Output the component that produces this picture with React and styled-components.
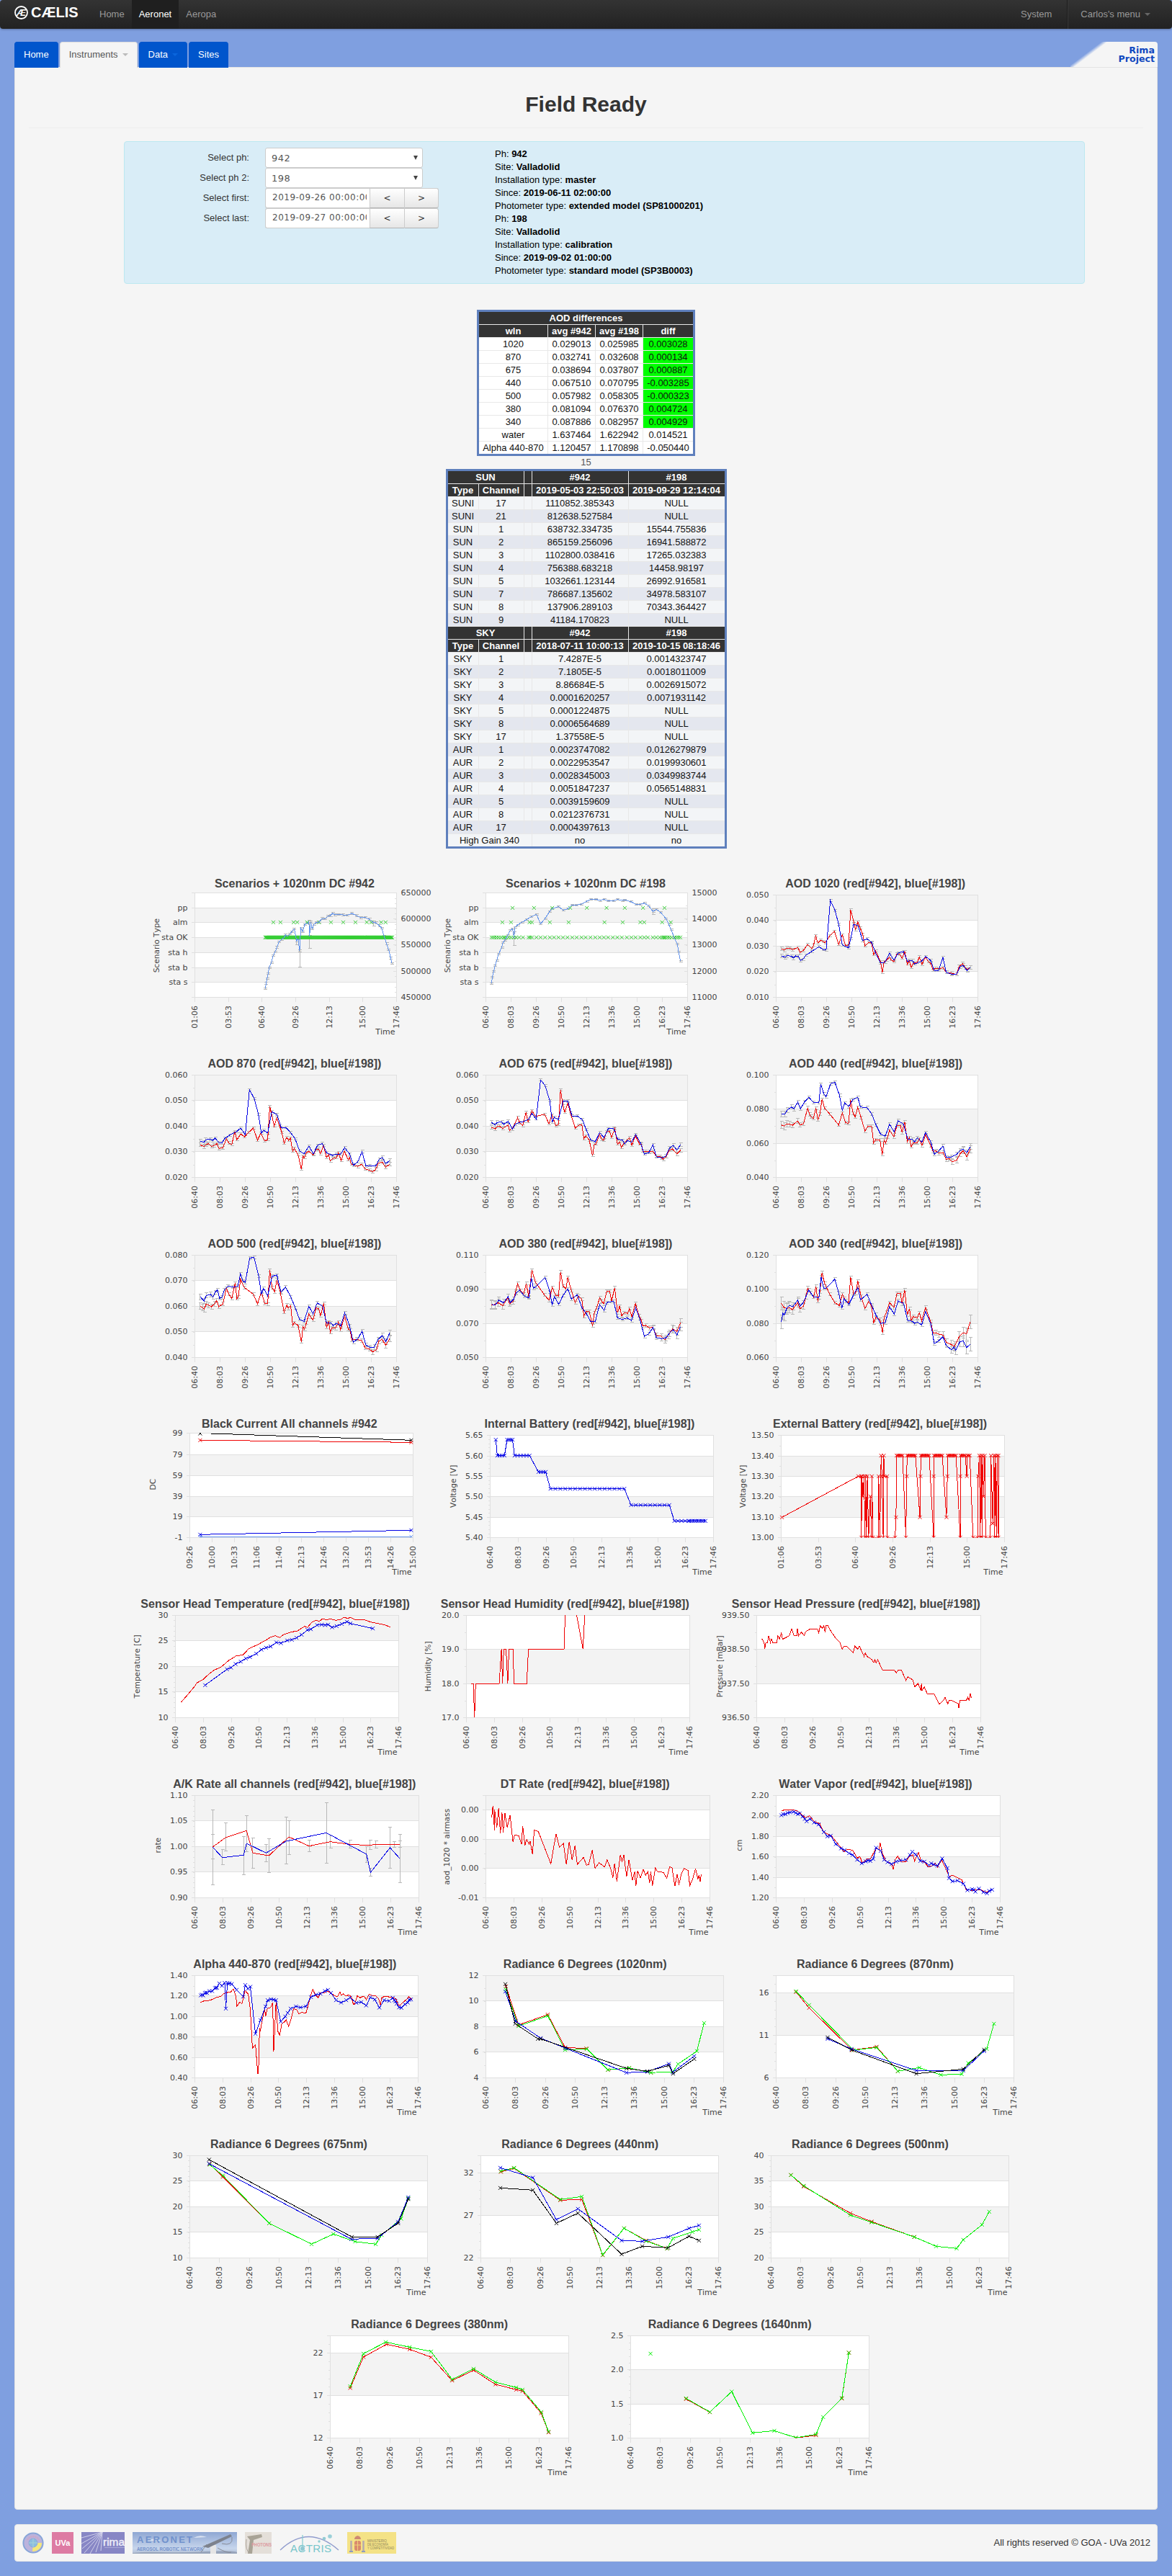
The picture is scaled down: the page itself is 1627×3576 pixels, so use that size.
import React from "react";
import styled, { createGlobalStyle, css } from "styled-components";

const Global = createGlobalStyle`
  body { margin: 0; background: #7f9fe0; }
  *, *::before, *::after { box-sizing: border-box; }
  #root { font: 13px/18px "Liberation Sans", Arial, sans-serif; color: #333; }
`;

/* ---------- top navigation ---------- */

const Navbar = styled.nav`
  display: flex;
  height: 40px;
  padding: 0 20px;
  border-radius: 4px;
  background: linear-gradient(#333, #222);
  box-shadow: 0 1px 3px rgba(0, 0, 0, 0.3);
`;
const Brand = styled.div`
  display: flex;
  align-items: flex-start;
  gap: 4px;
  width: 108px;
  padding-top: 8px;
  color: #fff;
  font-size: 20px;
  line-height: 19px;
  font-weight: bold;
`;
const NavItem = styled.a`
  padding: 11px 10px;
  color: ${(p) => (p.$active ? "#fff" : "#999")};
  background: ${(p) => (p.$active ? "#1f1f1f" : "transparent")};
`;
const NavSpacer = styled.div`
  flex: 1;
`;
const UserMenu = styled(NavItem)`
  margin-left: 11px;
  padding-left: 18px;
  border-left: 1px solid #1c1c1c;
  box-shadow: inset 1px 0 0 #3a3a3a;
`;
const Caret = styled.i`
  display: inline-block;
  margin-left: 6px;
  vertical-align: 2px;
  border: 4px solid transparent;
  border-top-color: ${(p) => p.$color};
  border-bottom: 0;
`;

/* ---------- tabs and panel ---------- */

const Shell = styled.div`
  padding: 18px 20px 20px;
`;
const TabBar = styled.div`
  display: flex;
  gap: 2px;
  height: 35px;
`;
const Tab = styled.a`
  position: relative;
  height: 36px;
  padding: 8px 12px;
  border: 1px solid #05c;
  border-bottom: 0;
  border-radius: 4px 4px 0 0;
  background: #0055cc;
  color: #fff;
  ${(p) =>
    p.$active &&
    css`
      background: #f5f5f5;
      border-color: #ddd;
      color: #555;
    `}
`;
const ProjectTab = styled.div`
  margin-left: auto;
  width: 121px;
  padding: 6px 4px 0 0;
  border-radius: 0 4px 0 0;
  background: linear-gradient(143deg, transparent 26px, #f5f5f5 31px);
  color: #1048c0;
  font: bold 12.6px/12px "DejaVu Sans", sans-serif;
  text-align: right;
`;
const Panel = styled.main`
  height: 3391px;
  padding: 33px 19px 0;
  border: 1px solid #e3e3e3;
  border-radius: 0 0 4px 4px;
  background: #f5f5f5;
`;
const Title = styled.h1`
  margin: 0;
  padding-bottom: 14px;
  border-bottom: 1px solid #eee;
  font-size: 30px;
  line-height: 36px;
  text-align: center;
`;
const InfoBox = styled.section`
  display: flex;
  width: 1334px;
  height: 198px;
  margin: 18px auto 36px 132px;
  border: 1px solid #bce8f1;
  border-radius: 4px;
  background: #d9edf7;
`;
const Form = styled.div`
  display: grid;
  grid-template-columns: 173px 1fr;
  grid-auto-rows: 28px;
  column-gap: 22px;
  width: 514px;
  padding-top: 8px;
`;
const Label = styled.label`
  padding-top: 5px;
  text-align: right;
`;
const Control = styled.div`
  display: flex;
`;
const Select = styled.div`
  display: flex;
  align-items: center;
  justify-content: space-between;
  width: 219px;
  padding: 0 6px 0 8px;
  border: 1px solid #ccc;
  border-radius: 3px;
  background: #fff;
  color: #555;
  font: 13px "DejaVu Sans", sans-serif;
  letter-spacing: 0.5px;
`;
const Arrow = styled.i`
  border: 3px solid transparent;
  border-top: 6px solid #444;
  border-bottom: 0;
`;
const DateInput = styled.input`
  width: 145px;
  height: 28px;
  padding: 0 4px 2px 9px;
  border: 1px solid #ccc;
  border-right: 0;
  border-radius: 3px 0 0 3px;
  color: #555;
  font: 12px "DejaVu Sans", sans-serif;
  letter-spacing: 0.5px;
`;
const StepButton = styled.button`
  width: 48px;
  height: 28px;
  padding: 0;
  border: 1px solid #ccc;
  border-right-width: ${(p) => (p.$last ? 1 : 0)}px;
  border-bottom-color: #b3b3b3;
  border-radius: ${(p) => (p.$last ? "0 3px 3px 0" : 0)};
  background: linear-gradient(#fff, #e6e6e6);
  color: #333;
  font: 12px "DejaVu Sans", sans-serif;
`;
const Facts = styled.div`
  padding-top: 8px;
  color: #000;
`;

/* ---------- tables ---------- */

const DataTable = styled.table`
  width: ${(p) => p.$width}px;
  margin: 0 auto;
  table-layout: fixed;
  border-collapse: collapse;
  border: 3px solid #5f80bd;
  color: #111;
  line-height: 15px;
  text-align: center;
`;
const Cell = styled.td`
  height: 18px;
  padding: 1px 0;
  border: 1px solid #e8e8e8;
  background: ${(p) => p.$bg || "#fff"};
  white-space: nowrap;
`;
const Head = styled.th`
  height: 18px;
  padding: 1px 0;
  border: 1px solid #e8e8e8;
  background: #333;
  color: #fff;
`;
const Count = styled.div`
  color: #555;
  text-align: center;
`;

const aodRows = [
  ["1020", "0.029013", "0.025985", "0.003028"],
  ["870", "0.032741", "0.032608", "0.000134"],
  ["675", "0.038694", "0.037807", "0.000887"],
  ["440", "0.067510", "0.070795", "-0.003285"],
  ["500", "0.057982", "0.058305", "-0.000323"],
  ["380", "0.081094", "0.076370", "0.004724"],
  ["340", "0.087886", "0.082957", "0.004929"],
  ["water", "1.637464", "1.622942", "0.014521"],
  ["Alpha 440-870", "1.120457", "1.170898", "-0.050440"],
];
const sunRows = [
  ["SUNI", "17", "1110852.385343", "NULL"],
  ["SUNI", "21", "812638.527584", "NULL"],
  ["SUN", "1", "638732.334735", "15544.755836"],
  ["SUN", "2", "865159.256096", "16941.588872"],
  ["SUN", "3", "1102800.038416", "17265.032383"],
  ["SUN", "4", "756388.683218", "14458.98197"],
  ["SUN", "5", "1032661.123144", "26992.916581"],
  ["SUN", "7", "786687.135602", "34978.583107"],
  ["SUN", "8", "137906.289103", "70343.364427"],
  ["SUN", "9", "41184.170823", "NULL"],
];
const skyRows = [
  ["SKY", "1", "7.4287E-5", "0.0014323747"],
  ["SKY", "2", "7.1805E-5", "0.0018011009"],
  ["SKY", "3", "8.86684E-5", "0.0026915072"],
  ["SKY", "4", "0.0001620257", "0.0071931142"],
  ["SKY", "5", "0.0001224875", "NULL"],
  ["SKY", "8", "0.0006564689", "NULL"],
  ["SKY", "17", "1.37558E-5", "NULL"],
  ["AUR", "1", "0.0023747082", "0.0126279879"],
  ["AUR", "2", "0.0022953547", "0.0199930601"],
  ["AUR", "3", "0.0028345003", "0.0349983744"],
  ["AUR", "4", "0.0051847237", "0.0565148831"],
  ["AUR", "5", "0.0039159609", "NULL"],
  ["AUR", "8", "0.0212376731", "NULL"],
  ["AUR", "17", "0.0004397613", "NULL"],
];
const stripe = (i) => (i % 2 ? "#e4e7ef" : "#f3f5f7");

function CoefficientRows({ name, dates, rows }) {
  return (
    <>
      <tr>
        <Head colSpan={2}>{name}</Head><Head /><Head>#942</Head><Head>#198</Head>
      </tr>
      <tr>
        <Head>Type</Head><Head>Channel</Head><Head /><Head>{dates[0]}</Head><Head>{dates[1]}</Head>
      </tr>
      {rows.map((r, i) => (
        <tr key={i}>
          <Cell $bg={stripe(i)}>{r[0]}</Cell>
          <Cell $bg={stripe(i)}>{r[1]}</Cell>
          <Cell $bg={stripe(i)} />
          <Cell $bg={stripe(i)}>{r[2]}</Cell>
          <Cell $bg={stripe(i)}>{r[3]}</Cell>
        </tr>
      ))}
    </>
  );
}

/* ---------- charts ---------- */

const Charts = styled.section`
  display: flex;
  flex-direction: column;
  margin: 22px 0 0;
  padding-right: 1px;
`;
const ChartRow = styled.div`
  display: flex;
  justify-content: center;
  gap: 4px;
`;
const Plot = styled.svg`
  display: block;
  flex: none;
  overflow: visible;
  font: 11px "DejaVu Sans", sans-serif;
  font-kerning: none;
  fill: #444;
`;
const ChartTitle = styled.text`
  font: bold 16px "Liberation Sans", Arial, sans-serif;
  font-kerning: none;
  text-anchor: middle;
`;

const T9 = ["06:40", "08:03", "09:26", "10:50", "12:13", "13:36", "15:00", "16:23", "17:46"];
const T7 = ["01:06", "03:53", "06:40", "09:26", "12:13", "15:00", "17:46"];
const T11 = ["09:26", "10:00", "10:33", "11:06", "11:40", "12:13", "12:46", "13:20", "13:53", "14:26", "15:00"];

const UY = 3;
const wide = { k: 2.4123 };
const fine = { k: 1.2544 };
const mid = { k: 1.8447 };
const SHIFT = 1471.5;

const parse = (s) => s.trim().split(/\s+/).map((p) => p.split(",").map(Number));
const carry = (s) => parse(s).map(([x, y]) => [x + SHIFT, y]);
const both = (a, b) => [...parse(a), ...carry(b)];
const run = (x1, x2, y, step) => {
  const out = [];
  for (let x = x1; x <= x2; x += step) out.push([x, y]);
  return out;
};
const list = (s) => s.split(" ").map(Number);
const R = "#f00000", B = "#0000e6", G = "#00f000", K = "#000", C = "#6495ed", L = "#32cd32";

function Chart({ c }) {
  const X = (x) => x / c.k + c.ox;
  const Y = (y) => (y - (c.oy || 0)) / UY;
  const px = (v) => Math.round(v) + 0.5;
  const [x1, x2, y1, y2] = c.box;
  const l = px(X(x1)), r = px(X(x2)), t = px(Y(y1)), b = px(Y(y2));
  const edges = [...new Set([y1, ...c.y.map((v) => v[0]), y2])].sort((m, n) => n - m);
  const minors = [];
  if (c.minor) for (let y = y2 - c.minor; y > y1 + 4; y -= c.minor) minors.push(y);
  const rminors = [];
  if (c.rminor) for (let y = y2 - c.rminor; y > y1 + 4; y -= c.rminor) rminors.push(y);
  const id = "clip" + c.title.replace(/\W/g, "");
  const cross = (x, y) => `M${x - 2.5} ${y - 2.5}l5 5m0 -5l-5 5`;
  return (
    <Plot width="400" height="250" viewBox="0 0 400 250">
      <clipPath id={id}><rect x={l - 3} y={t - 0.5} width={r - l + 3} height={b - t + 0.5} /></clipPath>
      <ChartTitle x={X(c.tx)} y="32">{c.title}</ChartTitle>
      <g shapeRendering="crispEdges">
        {edges.slice(0, -1).map((e, i) => (
          <rect key={e} x={l} width={r - l} y={px(Y(edges[i + 1]))} height={px(Y(e)) - px(Y(edges[i + 1]))} fill={i % 2 ? "#f3f3f3" : "#fff"} />
        ))}
        <g stroke="#e0e0e0" fill="none">
          {edges.map((e) => <path key={e} d={`M${l - 5} ${px(Y(e))}H${r}`} />)}
          {minors.map((e) => <path key={e} d={`M${l - 3} ${px(Y(e))}h3`} />)}
          {(c.right || []).map(([e]) => <path key={e} d={`M${r - 5} ${px(Y(e))}h5`} />)}
          {rminors.map((e) => <path key={e} d={`M${r - 3} ${px(Y(e))}h3`} />)}
          <path d={`M${l} ${t}V${b}M${r} ${t}V${b}`} />
          {c.times.map((_, i) => <path key={i} d={`M${px(l - 0.5 + ((r - l) * i) / (c.times.length - 1))} ${b}v6`} />)}
        </g>
      </g>
      {c.y.map(([y, s]) => s && <text key={y} x={l - 10} y={Y(y) + 4} textAnchor="end">{s}</text>)}
      {(c.right || []).map(([y, s]) => <text key={y} x={r + 6} y={Y(y) + 4}>{s}</text>)}
      {c.times.map((s, i) => (
        <text key={i} textAnchor="end" transform={`translate(${l + ((r - l) * i) / (c.times.length - 1) + 3.5} 196) rotate(-90)`}>{s}</text>
      ))}
      {c.time !== false && <text x={r - 2} y="236" textAnchor="end">Time</text>}
      {c.label && (
        <text textAnchor="middle" fontSize="10.6" transform={`translate(${X(c.label[1]) + 4} ${Y(c.label[2])}) rotate(-90)`}>{c.label[0]}</text>
      )}
      <g clipPath={`url(#${id})`} fill="none" shapeRendering="crispEdges">
        {(c.bars || []).map(([x, a, z], i) => (
          <path key={i} stroke="#b8b8b8" d={`M${X(x)} ${Y(a)}V${Y(z)}M${X(x) - 2} ${Y(a)}h5M${X(x) - 2} ${Y(z)}h5`} />
        ))}
        {c.series.map((s, i) => s.err && (
          <path key={i} stroke="#b8b8b8" d={s.p.map(([x, y], j) => {
            const n = s.p.length;
            const e = s.err + (s.edge || 0) * Math.max(0, 1 - j / (n * 0.16), 1 - (n - 1 - j) / (n * 0.16));
            return `M${X(x)} ${Y(y) - e}v${2 * e}M${X(x) - 2} ${Y(y) - e}h5M${X(x) - 2} ${Y(y) + e}h5`;
          }).join("")} />
        ))}
        {c.series.map((s, i) => (
          <g key={i} stroke={s.c}>
            {!s.dots && <path d={"M" + s.p.map(([x, y]) => `${X(x).toFixed(1)} ${Y(y).toFixed(1)}`).join("L")} />}
            {(s.mark || s.dots) && <path shapeRendering="auto" d={s.p.map(([x, y]) => cross(X(x), Y(y))).join("")} />}
          </g>
        ))}
      </g>
    </Plot>
  );
}

const line = (c, p, o = {}) => ({ c, p: typeof p === "string" ? parse(p) : p, ...o });
const aod = { err: 1.6, edge: 1 };
const g4 = (o, s) => [[127 + o, s[0]], [232 + o, s[1]], [340 + o, s[2]], [445 + o, s[3]], [553 + o, s[4]]];
const g3 = (o, s) => [[127 + o, s[0]], [268 + o, s[1]], [411 + o, s[2]], [553 + o, s[3]]];
const g5 = (o, s) => [[127 + o, s[0]], [211 + o, s[1]], [298 + o, s[2]], [382 + o, s[3]], [468 + o, s[4]], [553 + o, s[5]]];
const gp = (o, s) => [[127 + o, null], [199 + o, s[0]], [376 + o, s[1]], [553 + o, s[2]]];
const scen = [[118, null], [181, "pp"], [241, "alm"], [304, "sta OK"], [367, "sta h"], [430, "sta b"], [490, "sta s"], [553, null]];
const rightAxis = (s) => [118, 226, 334, 445, 553].map((y, i) => [y, s[i]]);
const A0 = { ...wide, ox: -19 }, A1 = { ...wide, ox: -423 }, B2 = { ...wide, ox: -217.5 };

const rows = [
  [
    { ...A0, title: "Scenarios + 1020nm DC #942", tx: 528, box: [193, 869, 118, 553], y: scen, times: T7, label: ["Scenario Type", 66, 338],
      right: rightAxis(["650000", "600000", "550000", "500000", "450000"]), rminor: 21.75,
      bars: [[546, 310, 427], [578, 240, 348], [535, 300, 333], [793, 235, 256]],
      series: [
        line(L, [457, 481, 525, 537, 570, 610, 650, 691, 732, 770, 785, 818, 833].map((x) => [x, 241]), { dots: 1 }),
        line(L, run(430, 856, 304, 2.4), { dots: 1 }),
        line(C, "430,517 433,495 436,475 440,455 443,430 450,410 456,380 463,365 469,345 476,322 485,312 493,305 498,293 505,300 512,290 519,280 527,268 535,318 540,310 545,360 549,265 555,280 562,250 570,245 576,237 578,300 582,240 587,268 593,250 600,242 610,240 620,225 630,227 640,215 648,213 656,203 663,210 675,208 690,210 705,211 720,204 735,213 750,222 765,221 778,228 790,240 800,243 812,255 820,265 828,300 836,330 843,355 850,390 854,412", { err: 1.2 }),
      ] },
    { ...A1, title: "Scenarios + 1020nm DC #198", tx: 1502.7, box: [1168, 1843.5, 118, 553], y: scen, times: T9, label: ["Scenario Type", 1040, 338],
      right: rightAxis(["15000", "14000", "13000", "12000", "11000"]), rminor: 54.4,
      bars: [[1263, 280, 337], [1728.5, 185, 208]],
      series: [
        line(L, [1258, 1330, 1391, 1451, 1507, 1573, 1634, 1695, 1767].map((x) => [x, 181]), { dots: 1 }),
        line(L, [1224, 1253, 1315, 1323, 1383, 1446, 1566, 1627, 1686, 1699, 1759, 1788].map((x) => [x, 241]), { dots: 1 }),
        line(L, list("1188 1193 1198 1205 1212 1220 1228 1232 1237 1245 1253 1262 1270 1280 1293 1312 1317 1323 1338 1352 1367 1383 1397 1412 1427 1442 1458 1473 1489 1503 1519 1535 1550 1564 1578 1594 1609 1624 1641 1656 1670 1686 1699 1711 1728 1739 1751 1759 1764 1767 1771 1777 1783 1791 1801 1808 1814 1820").map((x) => [x, 304]), { dots: 1 }),
        line(C, both("1188,495 1190,470 1195,445 1200,420 1205,400 1212,372 1222,345 1226,325 1233,315 1242,295 1250,275 1258,268 1263,305 1266,262 1275,252 1290,240 1305,230 1320,218 1338,208 1352,247 1367,225 1383,195 1390,185 1412,176 1427,190 1442,185 1457,169 1472,169", "18,165 35,153 48,146 65,145 80,150 93,145 107,152 125,151 138,146 155,150 162,148 183,155 200,166 215,166 228,161 242,172 257,196 268,187 283,200 300,225 310,250 318,272 328,305 338,330 343,365 349,402"), { err: 1 }),
      ] },
    { ...B2, title: "AOD 1020 (red[#942], blue[#198])", tx: 1002.5, box: [669, 1345, 127, 553], minor: 53.2, time: false, times: T9,
      y: g4(0, ["0.050", "0.040", "0.030", "0.020", "0.010"]),
      series: [
        line(R, "688,350 698,357 706,348 716,349 726,355 743,346 751,367 762,358 776,333 790,351 796,335 803,297 810,327 820,316 828,320 835,326 850,297 865,278 880,332 892,293 903,338 913,335 920,190 930,236 936,272 944,240 952,265 960,290 968,340 980,325 990,328 997,375 1004,360 1020,405 1026,450 1032,405 1040,400 1050,385 1055,397 1065,405 1075,372 1085,375 1092,390 1101,363 1110,415 1116,400 1123,428 1130,412 1143,408 1150,385 1159,417 1170,385 1180,405 1188,412 1196,440 1204,433 1215,435 1230,430 1240,450 1258,453 1275,458 1283,425 1295,413 1303,428 1310,438 1321,429", aod),
        line(B, "688,380 700,387 706,380 722,382 728,390 736,381 745,383 752,400 760,395 770,378 790,362 814,343 828,355 838,356 852,150 868,192 880,250 892,335 913,347 920,310 930,250 945,255 960,317 975,310 990,325 1004,370 1020,410 1035,407 1050,370 1065,398 1080,368 1097,363 1110,403 1127,400 1134,415 1158,403 1171,383 1188,400 1200,442 1214,442 1229,388 1240,449 1258,457 1275,457 1286,427 1296,420 1310,442 1321,430", aod),
      ] },
  ],
  [
    { ...A0, oy: 750, title: "AOD 870 (red[#942], blue[#198])", tx: 528, box: [193, 869, 877, 1303], minor: 53.2, time: false, times: T9,
      y: g4(750, ["0.060", "0.050", "0.040", "0.030", "0.020"]),
      series: [
        line(R, "212,1168 225,1175 232,1166 240,1163 250,1175 258,1170 268,1163 275,1183 288,1180 300,1143 308,1160 318,1166 328,1112 335,1147 348,1122 360,1135 375,1115 390,1098 404,1148 415,1120 428,1152 438,1146 445,1008 452,1045 460,1090 469,1056 477,1085 485,1115 493,1160 502,1137 508,1150 514,1140 522,1195 527,1183 540,1210 551,1270 556,1215 561,1222 568,1200 576,1195 590,1210 600,1187 608,1185 615,1205 625,1170 635,1220 642,1208 648,1235 656,1225 668,1222 675,1200 684,1233 695,1195 708,1230 712,1220 718,1248 727,1252 740,1258 753,1248 764,1268 778,1273 790,1280 800,1270 808,1245 822,1240 833,1261 847,1248", aod),
        line(B, "212,1153 225,1157 230,1147 245,1144 254,1150 262,1140 275,1159 285,1160 295,1140 310,1128 325,1118 335,1112 347,1098 363,1125 377,938 393,975 407,1040 417,1120 424,1107 438,1118 452,1030 469,1042 483,1095 499,1096 515,1117 530,1143 545,1193 560,1206 576,1173 591,1205 605,1170 621,1162 635,1200 655,1212 668,1206 682,1207 696,1180 712,1205 725,1253 740,1238 754,1196 767,1257 780,1254 800,1255 812,1228 822,1220 833,1247 847,1233", aod),
      ] },
    { ...A1, oy: 750, title: "AOD 675 (red[#942], blue[#198])", tx: 1502.8, box: [1168, 1843.5, 877, 1303], minor: 53.2, time: false, times: T9,
      y: g4(750, ["0.060", "0.050", "0.040", "0.030", "0.020"]),
      series: [
        line(R, both("1188,1095 1200,1102 1207,1090 1215,1090 1225,1100 1243,1085 1248,1108 1260,1095 1275,1055 1282,1075 1292,1088 1303,1033 1310,1072 1323,1025 1335,1050 1365,1040 1380,1080 1390,1043 1403,1088 1412,1083 1419,938 1427,1005 1433,1033 1443,995 1452,1035 1468,1098 1478,1087 1490,1083 1497,1143 1503,1130 1515,1148 1526,1213 1532,1165 1537,1165 1550,1125 1557,1145", "92,1148 102,1112 112,1113 118,1137 129,1100 138,1165 145,1155 151,1178 160,1160 178,1137 186,1170 198,1130 212,1165 218,1165 223,1195 232,1195 245,1195 257,1195 268,1215 280,1215 292,1228 302,1215 312,1190 322,1185 337,1205 349,1190"), aod),
        line(B, both("1188,1075 1200,1085 1206,1075 1222,1072 1228,1083 1243,1070 1258,1102 1266,1083 1280,1075 1297,1070 1313,1060 1323,1037 1337,1060 1352,898 1367,920 1383,985 1391,1075 1398,1053 1412,1063 1427,985 1443,985 1457,1047 1475,1048 1492,1063 1505,1105 1520,1148 1535,1155 1550,1117", "93,1138 107,1100 125,1099 138,1143 155,1148 162,1163 172,1150 185,1157 199,1125 215,1160 228,1207 243,1200 257,1168 268,1217 285,1222 300,1215 312,1182 325,1170 337,1190 349,1167"), aod),
      ] },
    { ...B2, oy: 750, title: "AOD 440 (red[#942], blue[#198])", tx: 1003.5, box: [669, 1345, 877, 1303], minor: 71, time: false, times: T9,
      y: g3(750, ["0.100", "0.080", "0.060", "0.040"]),
      series: [
        line(R, "688,1085 698,1090 706,1080 716,1082 726,1086 742,1068 750,1085 762,1080 776,1015 782,1040 787,1050 795,1058 804,1015 810,1063 817,1040 824,978 833,1015 850,1040 880,1085 892,1035 903,1076 913,1078 920,982 928,1035 935,1052 944,1012 955,1055 968,1110 978,1090 990,1090 997,1160 1004,1146 1018,1147 1026,1208 1032,1147 1037,1160 1044,1135 1050,1107 1065,1135 1075,1087 1087,1087 1092,1117 1101,1073 1110,1155 1117,1137 1123,1175 1130,1158 1143,1160 1150,1143 1159,1170 1171,1125 1188,1170 1196,1195 1205,1193 1215,1203 1230,1200 1240,1228 1250,1225 1260,1238 1275,1232 1286,1205 1297,1192 1309,1218 1321,1185", { err: 2, edge: 3 }),
        line(B, "688,1040 700,1040 708,1022 722,1010 730,1018 743,990 752,1018 765,990 780,970 795,990 814,992 820,915 830,955 838,968 853,913 867,907 883,962 892,1025 900,993 913,1008 927,980 944,970 953,1010 975,1013 990,1038 1005,1085 1020,1122 1036,1132 1050,1082 1066,1113 1079,1067 1097,1082 1111,1143 1127,1145 1134,1155 1143,1138 1158,1157 1171,1117 1188,1155 1200,1207 1214,1195 1229,1172 1240,1220 1258,1218 1275,1208 1286,1192 1297,1185 1309,1200 1321,1175", { err: 2, edge: 2 }),
      ] },
  ],
  [
    { ...A0, title: "AOD 500 (red[#942], blue[#198])", tx: 528, box: [193, 869, 127, 553], minor: 53.2, time: false, times: T9,
      y: g4(0, ["0.080", "0.070", "0.060", "0.050", "0.040"]),
      series: [
        line(R, "212,340 220,345 226,352 232,330 240,335 250,342 260,330 267,316 274,342 288,330 300,265 308,290 318,308 329,243 335,308 340,300 347,228 360,262 390,290 404,330 417,280 428,327 438,330 445,190 453,262 461,280 469,230 480,280 493,365 502,335 507,348 515,338 522,420 527,408 540,420 551,488 556,425 561,435 568,408 576,372 582,385 590,398 600,347 609,350 615,380 626,328 635,428 642,405 648,448 653,430 665,432 675,405 682,438 696,382 708,435 714,440 720,480 735,478 753,483 764,513 778,518 790,530 803,520 810,485 822,478 833,503 847,475", { err: 2, edge: 2.5 }),
        line(B, "212,300 225,318 232,295 247,291 255,302 262,282 270,272 277,307 285,303 293,272 305,256 320,260 338,257 347,205 355,235 363,240 378,140 392,136 408,215 417,290 424,265 438,296 453,215 469,210 483,282 498,260 515,300 530,345 545,395 560,403 576,340 590,372 604,326 622,340 635,408 650,408 657,420 668,411 683,421 696,367 712,420 725,490 740,475 754,444 767,502 780,510 795,510 808,478 822,462 834,488 847,450", { err: 2, edge: 2 }),
      ] },
    { ...A1, title: "AOD 380 (red[#942], blue[#198])", tx: 1502.8, box: [1168, 1843.5, 127, 553], minor: 71, time: false, times: T9,
      y: g3(0, ["0.110", "0.090", "0.070", "0.050"]),
      series: [
        line(R, both("1188,335 1200,332 1210,325 1225,338 1243,303 1248,330 1260,320 1268,280 1275,247 1285,275 1295,290 1304,245 1312,300 1323,190 1335,240 1365,293 1380,315 1391,262 1403,295 1412,297 1419,197 1427,255 1437,268 1443,220 1455,275 1468,325 1478,298 1490,310 1497,382 1505,360 1515,362 1526,422 1532,367 1540,345 1550,305 1557,320", "92,330 102,278 112,277 118,318 129,263 138,367 145,340 152,380 160,367 172,370 178,350 186,383 198,328 210,380 218,400 223,423 233,420 245,430 257,427 268,462 285,465 297,480 308,460 322,435 337,445 349,408"), { err: 2, edge: 4 }),
        line(B, both("1188,332 1200,335 1212,315 1228,325 1243,300 1250,325 1262,310 1270,285 1282,273 1297,297 1313,305 1321,222 1328,265 1337,258 1367,220 1383,280 1391,335 1398,300 1413,332 1427,295 1443,268 1455,310 1475,292 1490,345 1505,370 1520,405 1535,403 1550,333", "93,357 102,325 125,318 138,388 155,395 170,388 185,400 199,347 212,390 228,465 243,455 257,428 268,470 285,475 300,472 312,452 325,437 337,460 349,425"), { err: 2, edge: 4 }),
      ] },
    { ...B2, title: "AOD 340 (red[#942], blue[#198])", tx: 1003.5, box: [669, 1345, 127, 553], minor: 71, time: false, times: T9,
      y: g3(0, ["0.120", "0.100", "0.080", "0.060"]),
      series: [
        line(R, "688,328 697,345 706,350 715,345 725,355 743,325 750,350 762,340 770,300 776,265 786,285 796,302 804,257 810,320 817,280 824,200 833,245 850,290 867,325 882,337 892,290 903,318 913,325 920,220 930,290 937,285 944,235 955,300 968,350 980,320 990,340 997,410 1004,387 1018,395 1027,450 1032,388 1040,365 1050,325 1065,345 1075,288 1087,287 1092,330 1101,272 1110,375 1117,350 1123,400 1130,383 1143,388 1150,368 1158,400 1171,345 1188,405 1196,450 1205,450 1215,457 1230,460 1240,490 1258,500 1268,507 1283,467 1297,450 1308,455 1321,405", { err: 2.3, edge: 7 }),
        line(B, "688,405 693,370 698,377 706,348 714,338 728,340 743,315 751,340 762,323 780,272 795,300 814,305 821,218 830,265 838,265 867,227 880,285 891,347 898,308 914,332 927,300 944,262 953,313 975,290 990,335 1004,375 1020,412 1036,408 1050,343 1066,372 1079,318 1097,328 1111,400 1127,403 1134,412 1143,405 1158,418 1171,362 1188,412 1200,495 1214,485 1229,467 1240,503 1258,522 1266,510 1272,523 1286,487 1297,485 1308,512 1321,498", { err: 2.3, edge: 7 }),
      ] },
  ],
  [
    { ...A0, oy: 750, title: "Black Current All channels #942", tx: 511, box: [177, 925, 868, 1303], times: T11, label: ["DC", 53, 1082],
      y: [[868, "99"], [958, "79"], [1045, "59"], [1132, "39"], [1216, "19"], [1303, "-1"]],
      series: [line(C, "212,1300 919,1300", { mark: 1 }), line(K, "248,870 919,898"), line(K, "212,870", { dots: 1 }), line(K, "919,898", { dots: 1 }), line(R, "212,898 919,907", { mark: 1 }), line(B, "212,1291 919,1273", { mark: 1 })] },
    { ...A1, oy: 750, title: "Internal Battery (red[#942], blue[#198])", tx: 1516, box: [1183, 1930.5, 877, 1303], minor: 17.04, times: T9, label: ["Voltage [V]", 1058, 1090],
      y: [[877, "5.65"], [962, "5.60"], [1048, "5.55"], [1132, "5.50"], [1218, "5.45"], [1303, "5.40"]],
      series: [line(B, [[1202, 896], ...run(1207, 1232, 962, 8), ...run(1240, 1258, 896, 6), ...run(1265, 1324, 962, 10), ...run(1345, 1369, 1030, 8), ...run(1385, 1639, 1100, 16.5), ...run(1655, 1788, 1168, 16), ...run(1800, 1850, 1234, 12), ...run(1850, 1907, 1234, 6)], { mark: 1 })] },
    { ...B2, oy: 750, title: "External Battery (red[#942], blue[#198])", tx: 1018, box: [686, 1434, 877, 1303], minor: 42.6, times: T7, label: ["Voltage [V]", 558, 1090],
      y: [[877, "13.50"], [962, "13.40"], [1048, "13.30"], [1132, "13.20"], [1218, "13.10"], [1303, "13.00"]],
      series: [line(R, [...parse("690,1219 946,1048 955,1048 956,1303 958,1048 961,1132 965,1048 968,1303 970,1048 973,1303 976,1048 980,1303 986,1132 990,1303 991,1048 995,1303 1013,1303 1014,1048 1018,1303 1022,962 1025,1048 1029,1303 1031,962 1033,1048 1042,1048 1043,1303 1069,1303 1072,1219"),
        ...run(1074, 1095, 962, 4), [1105, 1303], [1108, 1048], ...run(1109, 1138, 962, 4), [1152, 1219], [1154, 1048], ...run(1155, 1185, 962, 4), [1198, 1303], [1198, 1048], ...run(1199, 1228, 962, 4), [1241, 1219], [1244, 1048], ...run(1245, 1275, 962, 4), [1287, 1303], [1287, 1048], ...run(1288, 1305, 962, 4), [1309, 1048], ...run(1311, 1320, 962, 4),
        ...parse("1330,1303 1345,1303 1347,1048 1351,962 1354,1303 1357,962 1360,1303 1362,962 1365,1132 1369,962 1372,1303 1388,1303 1390,962 1396,1245 1400,962 1402,1303 1405,962 1408,1303 1411,962 1415,1303 1415,962")], { mark: 1 })] },
  ],
  [
    { ...fine, ox: -39, title: "Sensor Head Temperature (red[#942], blue[#198])", tx: 266, box: [92, 481, 127, 553], minor: 21.3, times: T9, label: ["Temperature [C]", 25, 340],
      y: g4(0, ["30", "25", "20", "15", "10"]),
      series: [
        line(R, "102,490 112,462 125,425 130,408 140,395 150,373 160,355 172,342 185,315 198,296 210,292 220,266 235,250 250,230 258,218 266,212 274,220 280,208 293,197 305,192 317,173 322,178 330,155 337,148 343,152 348,142 356,146 362,142 372,148 380,145 386,135 392,140 397,136 405,145 420,145 432,155 447,162 458,168 467,177"),
        line(B, "144,418 182,352 189,345 197,330 206,320 215,307 222,301 233,287 242,270 250,262 258,257 268,240 276,243 287,232 295,229 303,221 312,208 322,188 328,185 339,168 347,166 353,168 358,166 365,177 373,172 382,163 391,154 397,161 436,182", { mark: 1 }),
      ] },
    { ...fine, ox: -443, title: "Sensor Head Humidity (red[#942], blue[#198])", tx: 770.5, box: [598, 987, 127, 553], minor: 71, times: T9, label: ["Humidity [%]", 532, 340],
      y: g3(0, ["20.0", "19.0", "18.0", "17.0"]),
      series: [
        line(R, "607,411 611,411 613,553 615,411 656,411 660,268 662,411 664,268 668,268 671,411 673,268 680,268 682,411 704,411 707,268 769,268 771,127"),
        line(R, "791,127 802,268 805,127"),
      ] },
    { ...fine, ox: -847.5, title: "Sensor Head Pressure (red[#942], blue[#198])", tx: 1278, box: [1105, 1494, 127, 553], minor: 71, times: T9, label: ["Pressure [mBar]", 1040, 340],
      y: g3(0, ["939.50", "938.50", "937.50", "936.50"]),
      series: [line(R, "1114,225 1118,240 1119,268 1121,240 1124,240 1126,212 1129,240 1131,225 1133,240 1140,240 1142,212 1145,225 1148,198 1150,227 1162,212 1166,184 1170,212 1175,212 1176,184 1178,212 1183,198 1188,212 1190,196 1198,184 1211,184 1213,200 1216,170 1219,182 1222,170 1224,198 1226,170 1229,170 1235,196 1242,220 1250,240 1254,268 1257,256 1262,256 1273,283 1276,256 1281,268 1284,256 1292,298 1294,284 1297,298 1305,310 1309,325 1311,312 1313,325 1316,313 1324,355 1345,355 1348,367 1352,355 1357,355 1365,398 1368,383 1377,396 1380,425 1386,411 1391,440 1392,412 1393,440 1397,425 1402,454 1414,454 1423,497 1430,482 1433,468 1438,497 1440,482 1445,482 1456,495 1457,512 1459,482 1470,482 1473,468 1475,482 1477,454 1479,470")] },
  ],
  [
    { ...fine, ox: -39, oy: 750, title: "A/K Rate all channels (red[#942], blue[#198])", tx: 299.5, box: [125, 515, 877, 1303], minor: 21.3, times: T9, label: ["rate", 62, 1085],
      y: g4(750, ["1.10", "1.05", "1.00", "0.95", "0.90"]),
      bars: parse("157,937,1249 157,1040,1141 174,1102,1165 180,991,1107 211,1048,1207 216,961,1112 227,1054,1180 250,1081,1153 255,1057,1198 285,967,1162 290,982,1123 325,1063,1111 355,907,1159 362,1045,1096 396,1063,1096 425,1090,1156 431,1063,1102 432,1180,1213 441,1066,1095 466,1009,1180 473,1070,1092 483,1040,1092 483,1066,1240"),
      series: [
        line(R, "157,1092 180,1052 216,1024 227,1117 255,1128 290,1050 325,1088 362,1070 396,1081 430,1085 441,1081 483,1081"),
        line(B, "157,1092 174,1136 211,1126 216,1077 250,1117 285,1068 355,1033 396,1085 425,1122 432,1198 466,1095 483,1140"),
      ] },
    { ...fine, ox: -443, oy: 750, title: "DT Rate (red[#942], blue[#198])", tx: 805.5, box: [632, 1022, 877, 1303], minor: 61, times: T9, label: ["aod_1020 * airmass", 565, 1091],
      y: [[877, null], [937, "0.00"], [1060, "0.00"], [1180, "0.00"], [1303, "-0.01"]],
      series: [line(R, "643,968 645,922 648,1022 648,935 652,1010 655,930 658,1035 661,948 663,1033 666,950 670,1010 675,960 680,1070 683,1042 690,1045 695,1080 697,1005 701,1085 704,1060 708,1080 710,1068 714,1123 717,1022 724,1027 746,1162 755,1037 761,1093 768,1078 773,1165 778,1070 783,1145 788,1085 792,1165 803,1135 808,1168 812,1165 818,1105 823,1180 830,1158 840,1175 844,1145 850,1180 854,1220 857,1160 861,1235 867,1125 870,1155 873,1125 878,1215 882,1145 888,1230 892,1195 894,1255 897,1192 902,1220 907,1185 911,1210 915,1195 918,1243 920,1195 923,1253 928,1180 932,1195 942,1198 948,1222 953,1175 957,1178 962,1255 966,1205 969,1250 973,1205 978,1182 985,1190 988,1253 993,1225 998,1182 1002,1225 1004,1210 1006,1235 1008,1205")] },
    { ...fine, ox: -847.5, oy: 750, title: "Water Vapor (red[#942], blue[#198])", tx: 1312, box: [1138, 1528, 877, 1303], minor: 42.6, times: T9, label: ["cm", 1075, 1085],
      y: g5(750, ["2.20", "2.00", "1.80", "1.60", "1.40", "1.20"]),
      series: [
        line(R, "1148,940 1160,937 1175,940 1190,970 1197,962 1205,985 1215,995 1222,1030 1235,1045 1250,1090 1257,1112 1262,1102 1272,1105 1280,1138 1285,1132 1289,1160 1297,1142 1303,1142 1309,1115 1314,1095 1318,1105 1320,1075 1324,1120 1330,1150 1340,1163 1343,1185 1346,1145 1351,1130 1356,1152 1364,1155 1372,1128 1377,1125 1380,1150 1387,1115 1391,1150 1397,1155 1404,1175 1411,1170 1416,1160 1420,1175 1427,1145 1435,1185 1440,1215 1446,1210 1455,1220 1462,1228 1470,1270 1480,1273 1495,1270 1505,1280 1515,1270"),
        line(B, "1148,960 1151,955 1155,955 1159,950 1163,948 1170,945 1173,950 1177,955 1180,952 1185,965 1189,975 1192,985 1198,975 1205,990 1213,998 1222,1030 1228,1048 1234,1045 1243,1080 1252,1098 1258,1105 1266,1118 1272,1125 1280,1145 1288,1160 1295,1152 1299,1148 1303,1150 1308,1142 1313,1095 1321,1108 1327,1145 1333,1155 1340,1163 1348,1153 1355,1148 1365,1145 1372,1125 1376,1112 1382,1123 1390,1150 1397,1153 1405,1168 1409,1160 1413,1165 1420,1170 1428,1140 1437,1180 1440,1222 1446,1235 1455,1232 1465,1245 1472,1272 1480,1268 1483,1270 1486,1278 1492,1265 1500,1280 1506,1285 1510,1275 1515,1270", { mark: 1 }),
      ] },
  ],
  [
    { ...A0, title: "Alpha 440-870 (red[#942], blue[#198])", tx: 529, box: [193, 942, 127, 553], minor: 42.6, times: T9,
      y: g5(0, ["1.40", "1.20", "1.00", "0.80", "0.60", "0.40"]),
      series: [
        line(R, "212,239 225,233 240,232 255,226 268,217 280,215 290,203 305,197 315,195 323,183 332,215 335,255 345,237 352,245 362,190 373,205 380,270 387,430 397,415 405,535 407,535 411,345 414,355 418,325 428,265 431,297 437,265 448,260 455,240 458,445 466,237 472,360 478,375 485,330 500,313 508,338 515,315 525,265 535,270 543,287 552,280 566,285 575,245 582,210 589,185 598,208 607,220 615,200 630,198 640,192 652,203 665,213 673,213 680,195 685,210 692,203 700,213 710,208 718,215 725,247 730,245 738,212 748,220 755,215 762,215 768,228 778,205 790,212 800,212 810,225 815,250 820,220 830,214 840,215 850,218 860,220 868,225 875,250 883,250 895,235 905,225 911,215 920,228"),
        line(B, "214,210 218,207 222,210 228,200 232,198 235,200 243,192 252,192 262,180 265,178 268,178 276,160 285,170 294,158 298,265 303,158 307,162 310,160 318,163 334,187 356,215 363,167 372,182 380,174 397,370 414,313 431,256 438,230 449,226 458,228 466,230 482,319 497,298 505,283 515,265 533,256 548,260 566,256 583,217 600,207 615,203 630,192 640,187 650,200 667,230 684,240 701,230 714,220 735,241 751,238 768,252 782,218 797,227 812,261 828,230 845,233 857,220 862,230 866,235 870,245 878,260 886,262 898,247 907,240 912,228 918,227", { mark: 1 }),
      ] },
    { ...A1, title: "Radiance 6 Degrees (1020nm)", tx: 1501, box: [1168, 1964.5, 127, 553], minor: 53.2, times: T9,
      y: g4(0, ["12", "10", "8", "6", "4"]),
      series: [
        line(R, both("1236,172 1278,333 1376,290 1434,427 1505,431", "106,520 177,513 250,532"), { mark: 1 }),
        line(G, both("1235,185 1278,338 1376,295 1434,437 1507,433", "106,520 177,512 250,532 323,528 341,496 404,442 428,325"), { mark: 1 }),
        line(B, both("1234,194 1269,318 1352,388 1435,430", "168,532 238,528 310,495 323,530 395,463"), { mark: 1 }),
        line(K, both("1234,163 1267,328 1343,391 1352,391", "168,514 238,526 310,502 324,536 395,475"), { mark: 1 }),
      ] },
    { ...B2, title: "Radiance 6 Degrees (870nm)", tx: 1002, box: [669, 1466, 127, 553], minor: 35.5, times: T9, y: gp(0, ["16", "11", "6"]),
      series: [
        line(R, "737,196 781,262 925,438 1007,424 1078,526", { mark: 1 }),
        line(G, "737,193 781,250 930,438 1007,427 1078,526 1150,511 1222,541 1292,538 1314,492 1376,433 1400,328", { mark: 1 }),
        line(B, "843,391 923,433 1140,523 1297,523 1367,442", { mark: 1 }),
        line(K, "843,385 923,437 1140,536 1297,517 1367,436", { mark: 1 }),
      ] },
  ],
  [
    { ...A0, oy: 750, title: "Radiance 6 Degrees (675nm)", tx: 509, box: [177, 973, 877, 1303], minor: 21.3, times: T9, y: g4(750, ["30", "25", "20", "15", "10"]),
      series: [
        line(R, "244,912 288,966 443,1159", { mark: 1 }),
        line(G, "244,915 288,960 443,1159 585,1246 658,1204 731,1235 800,1246 820,1208 885,1140 909,1055", { mark: 1 }),
        line(B, "242,911 718,1225 806,1222 875,1153 909,1051", { mark: 1 }),
        line(K, "242,894 720,1216 806,1216 875,1159 909,1058", { mark: 1 }),
      ] },
    { ...A1, oy: 750, title: "Radiance 6 Degrees (440nm)", tx: 1484, box: [1151, 1947.5, 877, 1303], minor: 35.5, times: T9, y: gp(750, ["32", "27", "22"]),
      series: [
        line(R, both("1219,945 1263,930 1418,1063 1490,1060 1560,1292", "160,1180 234,1231 304,1264"), { mark: 1 }),
        line(G, both("1219,942 1263,928 1418,1060 1490,1048 1560,1291", "160,1180 234,1233 304,1264 324,1222 389,1195 411,1186"), { mark: 1 }),
        line(B, both("1217,928 1326,969 1405,1144 1477,1099", "152,1231 221,1234 308,1216 378,1180 411,1168"), { mark: 1 }),
        line(K, both("1217,1012 1326,1021 1405,1159 1477,1117", "152,1288 221,1255 308,1261 378,1213 411,1231"), { mark: 1 }),
      ] },
    { ...B2, oy: 750, title: "Radiance 6 Degrees (500nm)", tx: 985, box: [652, 1449, 877, 1303], minor: 21.3, times: T9, y: g4(750, ["40", "35", "30", "25", "20"]),
      series: [
        line(R, "720,958 763,1006 919,1117 990,1152 1133,1216", { mark: 1 }),
        line(G, "720,958 763,1003 919,1125 990,1155 1133,1216 1206,1255 1275,1264 1297,1228 1360,1165 1384,1111", { mark: 1 }),
      ] },
  ],
  [
    { ...mid, ox: -11, title: "Radiance 6 Degrees (380nm)", tx: 362, box: [107, 717, 127, 553], minor: 35.5, times: T9, y: gp(0, ["22", "17", "12"]),
      series: [
        line(R, "159,345 193,216 252,163 311,184 366,217 420,314 475,271 531,330 584,352 600,358 648,450 667,530", { mark: 1 }),
        line(G, "159,338 193,202 250,154 311,175 366,193 420,309 475,265 531,321 584,343 600,352 648,445 667,527", { mark: 1 }),
      ] },
    { ...mid, ox: -415, title: "Radiance 6 Degrees (1640nm)", tx: 1131, box: [877, 1486, 127, 553], minor: 28.4, times: T9, y: g3(0, ["2.5", "2.0", "1.5", "1.0"]),
      series: [
        line(R, "1019,391 1080,446", { mark: 1 }),
        line(R, "1300,553 1352,542", { mark: 1 }),
        line(R, "1418,389 1436,198", { mark: 1 }),
        line(G, "928,202", { dots: 1 }),
        line(G, "1019,388 1080,445 1136,360 1189,532 1245,523 1300,552 1352,538 1370,466 1418,387 1436,198", { mark: 1 }),
      ] },
  ],
];

/* ---------- footer ---------- */

const Footer = styled.footer`
  display: flex;
  align-items: center;
  height: 52px;
  margin-top: 20px;
  padding: 0 9px 0 10px;
  border: 1px solid #e6e6e6;
  border-radius: 4px;
  background: #f5f5f5;
`;
const Logos = styled.div`
  display: flex;
  align-items: center;
  gap: 11px;
`;
const Rights = styled.div`
  margin-left: auto;
`;
const Logo = styled.svg`
  display: block;
  font-family: "Liberation Sans", Arial, sans-serif;
`;

function FooterLogos() {
  return (
    <Logos>
      <Logo width="30" height="30" viewBox="0 0 30 30">
        <circle cx="15" cy="15" r="13.6" fill="#bbb3dc" stroke="#87a5d8" strokeWidth="2" />
        <path d="M15 15H27A12 12 0 0 1 14 27Z" fill="#f4e87a" />
        <circle cx="15" cy="15" r="6" fill="#8bbbe0" stroke="#8aa8da" />
        <path d="M9 15h12M15 9v12" stroke="#a5d4d8" fill="none" />
        <path d="M7 11A9 9 0 0 1 23 11" fill="none" stroke="#cfa6c4" strokeWidth="2" strokeDasharray="2 1" />
      </Logo>
      <Logo width="30" height="30" viewBox="0 0 30 30">
        <rect width="30" height="30" fill="#dd7ba3" />
        <text x="15" y="19" textAnchor="middle" fontSize="11" fontWeight="bold" fill="#fff">UVa</text>
      </Logo>
      <Logo width="60" height="30" viewBox="0 0 60 30">
        <rect width="60" height="30" fill="#8786c5" />
        <path d="M29 0L0 8M29 0L0 16M29 0L1 23M29 0L4 29M29 0L12 30M29 0L20 28M29 0L27 26" stroke="#d0d0ea" />
        <text x="30" y="19" fontSize="15" textLength="30" lengthAdjust="spacingAndGlyphs" fill="#f0f0fa" stroke="#f0f0fa" strokeWidth="0.400">rima</text>
        <path d="M32 21.5h28" stroke="#a9a8d8" />
      </Logo>
      <Logo width="145" height="30" viewBox="0 0 145 30">
        <defs><linearGradient id="sky" x2="0" y2="1"><stop stopColor="#8fa7d3" /><stop offset="0.75" stopColor="#c6d5ec" /><stop offset="1" stopColor="#b4c0d4" /></linearGradient></defs>
        <rect width="145" height="30" fill="url(#sky)" />
        <path d="M0 29q20 -2 40 -1t60 -1t45 1v2H0z" fill="#98a5bb" />
        <path d="M20 12q9 -5 20 0zM85 8q8 -5 18 -1zM60 24q20 -6 40 0z" fill="#dbe3f1" />
        <text x="6" y="15" fontSize="13" fontWeight="bold" textLength="77" fill="#7091cc">AERONET</text>
        <text x="6" y="25.5" fontSize="7.5" fontWeight="bold" textLength="92" lengthAdjust="spacingAndGlyphs" fill="#7391cb">AEROSOL ROBOTIC NETWORK</text>
        <path d="M108 30V18h8v12z" fill="#e5e5e5" />
        <path d="M97 20L136 3l2 3L105 22z" fill="#7d828d" />
        <path d="M95 28l8 -11M118 22q14 8 19 6M124 16q16 4 14 -9" fill="none" stroke="#868b97" />
      </Logo>
      <Logo width="37" height="30" viewBox="0 0 37 30">
        <rect width="37" height="30" fill="#e4dfd9" />
        <path d="M3 6L23 3l1 4L12 11L10 30H4L7 11z" fill="#a8a396" />
        <path d="M2 10q-2 15 5 20" fill="none" stroke="#aaa39b" />
        <text x="9" y="19.5" fontSize="6.5" fontWeight="bold" textLength="28" lengthAdjust="spacingAndGlyphs" fill="#dc9a9f">PHOTONS</text>
      </Logo>
      <Logo width="83" height="30" viewBox="0 0 83 30">
        <path d="M1 25Q40 -12 82 25" fill="none" stroke="#8f9bcd" strokeWidth="1.300" />
        <text x="15" y="27.500" fontSize="15" textLength="57" fill="#78c6cb">ACTRIS</text>
        <path d="M32 4v19" stroke="#84cbd0" strokeWidth="1.2" />
        <circle cx="32" cy="23" r="3" fill="#8fc8d2" /><circle cx="55" cy="13" r="1.7" fill="#8fcfd2" />
        <circle cx="62" cy="9" r="2.3" fill="#92cbd3" /><circle cx="70" cy="6" r="2.8" fill="#9bd0d8" />
      </Logo>
      <Logo width="68" height="30" viewBox="0 0 68 30">
        <rect width="68" height="30" fill="#f4e286" />
        <rect x="10" y="12" width="9" height="14" rx="3" fill="#d98a6d" />
        <path d="M14.5 12v14M10 18h9" stroke="#f0cf78" />
        <path d="M10 10q0 -4 4.500 -5q4.500 1 4.500 5z" fill="#cf8a73" />
        <path d="M5.500 12v14M22.500 12v14" stroke="#b5abae" strokeWidth="2.500" />
        <path d="M3 27h5M20 27h5" stroke="#8f9cc0" strokeWidth="2" />
        <g fontSize="4.6" fill="#8f865c">
          <text x="28" y="14">MINISTERIO</text>
          <text x="28" y="19" textLength="29" lengthAdjust="spacingAndGlyphs">DE ECONOMÍA</text>
          <text x="28" y="23.500" textLength="37" lengthAdjust="spacingAndGlyphs">Y COMPETITIVIDAD</text>
        </g>
      </Logo>
    </Logos>
  );
}

const facts = [
  ["Ph", "942"], ["Site", "Valladolid"], ["Installation type", "master"], ["Since", "2019-06-11 02:00:00"], ["Photometer type", "extended model (SP81000201)"],
  ["Ph", "198"], ["Site", "Valladolid"], ["Installation type", "calibration"], ["Since", "2019-09-02 01:00:00"], ["Photometer type", "standard model (SP3B0003)"],
];

export default function App() {
  return (
    <>
      <Global />
      <Navbar>
        <Brand>
          <svg width="19" height="19" viewBox="0 0 19 19">
            <circle cx="9.500" cy="9.500" r="8.500" fill="none" stroke="#fff" strokeWidth="1.800" />
            <text x="9.500" y="14" textAnchor="middle" fontFamily="Liberation Sans, Arial, sans-serif" fontStyle="italic" fontWeight="bold" fontSize="13" fill="#fff">Æ</text>
          </svg>
          CÆLIS
        </Brand>
        <NavItem>Home</NavItem>
        <NavItem $active>Aeronet</NavItem>
        <NavItem>Aeropa</NavItem>
        <NavSpacer />
        <NavItem>System</NavItem>
        <UserMenu>Carlos's menu<Caret $color="#666" /></UserMenu>
      </Navbar>
      <Shell>
        <TabBar>
          <Tab>Home</Tab>
          <Tab $active>Instruments<Caret $color="#bbb" /></Tab>
          <Tab>Data<Caret $color="#0a66dd" /></Tab>
          <Tab>Sites</Tab>
          <ProjectTab>Rima<br />Project</ProjectTab>
        </TabBar>
        <Panel>
          <Title>Field Ready</Title>
          <InfoBox>
            <Form>
              <Label>Select ph:</Label>
              <Control><Select>942<Arrow /></Select></Control>
              <Label>Select ph 2:</Label>
              <Control><Select>198<Arrow /></Select></Control>
              <Label>Select first:</Label>
              <Control><DateInput readOnly value="2019-09-26 00:00:00" /><StepButton>&lt;</StepButton><StepButton $last>&gt;</StepButton></Control>
              <Label>Select last:</Label>
              <Control><DateInput readOnly value="2019-09-27 00:00:00" /><StepButton>&lt;</StepButton><StepButton $last>&gt;</StepButton></Control>
            </Form>
            <Facts>
              {facts.map(([k, v], i) => <div key={i}>{k}: <b>{v}</b></div>)}
            </Facts>
          </InfoBox>
          <DataTable $width={303}>
            <colgroup><col style={{ width: 97 }} /><col style={{ width: 66 }} /><col style={{ width: 66 }} /><col /></colgroup>
            <tbody>
              <tr><Head colSpan={4}>AOD differences</Head></tr>
              <tr><Head>wln</Head><Head>avg #942</Head><Head>avg #198</Head><Head>diff</Head></tr>
              {aodRows.map((r, i) => (
                <tr key={i}>
                  <Cell>{r[0]}</Cell><Cell>{r[1]}</Cell><Cell>{r[2]}</Cell>
                  <Cell $bg={i < 7 ? "#00ff00" : "#fff"}>{r[3]}</Cell>
                </tr>
              ))}
            </tbody>
          </DataTable>
          <Count>15</Count>
          <DataTable $width={390}>
            <colgroup><col style={{ width: 44 }} /><col style={{ width: 63 }} /><col style={{ width: 11 }} /><col style={{ width: 134 }} /><col /></colgroup>
            <tbody>
              <CoefficientRows name="SUN" dates={["2019-05-03 22:50:03", "2019-09-29 12:14:04"]} rows={sunRows} />
              <CoefficientRows name="SKY" dates={["2018-07-11 10:00:13", "2019-10-15 08:18:46"]} rows={skyRows} />
              <tr><Cell colSpan={3} $bg="#f3f5f7">High Gain 340</Cell><Cell $bg="#f3f5f7">no</Cell><Cell $bg="#f3f5f7">no</Cell></tr>
            </tbody>
          </DataTable>
          <Charts>
            {rows.map((row, i) => (
              <ChartRow key={i}>{row.map((c) => <Chart key={c.title} c={c} />)}</ChartRow>
            ))}
          </Charts>
        </Panel>
        <Footer>
          <FooterLogos />
          <Rights>All rights reserved © GOA - UVa 2012</Rights>
        </Footer>
      </Shell>
    </>
  );
}
